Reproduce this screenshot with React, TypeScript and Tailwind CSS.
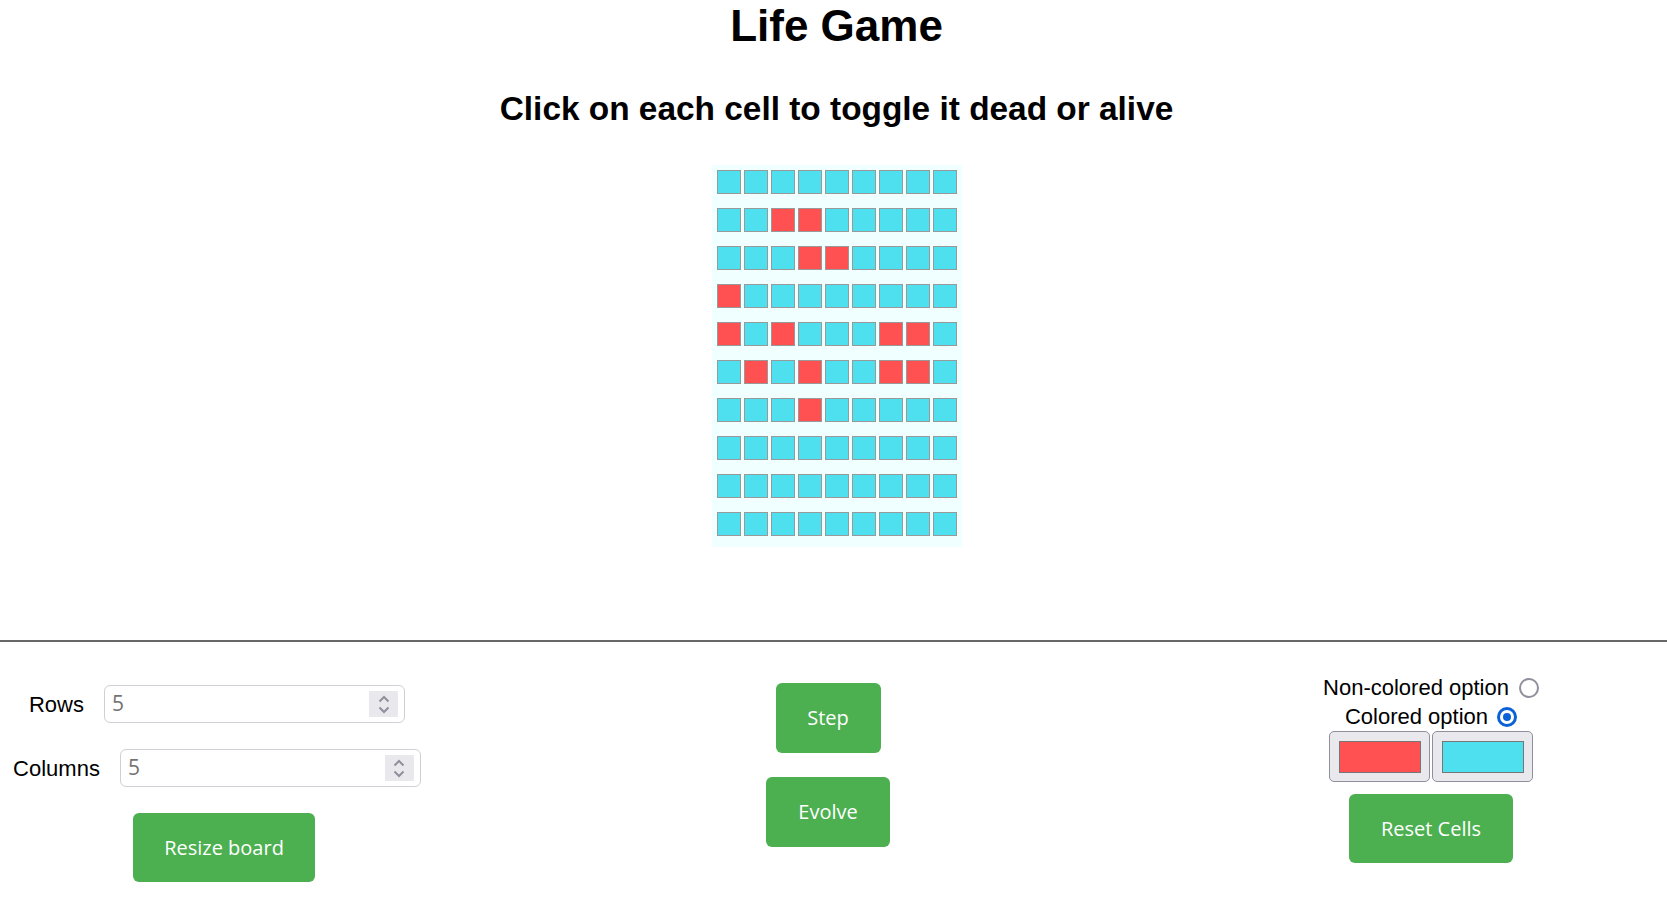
import React, { useState } from 'react'

const ALIVE: number[][] = [[], [2, 3], [3, 4], [0], [0, 2, 6, 7], [1, 3, 6, 7], [3], [], [], []]

const btn =
  "bg-[#4caf50] text-white rounded-[6px] text-[20px] font-['Open_Sans',sans-serif] flex items-center justify-center"

const Spinner = () => (
  <div className="absolute right-[6px] top-[5px] bottom-[5px] w-[29px] bg-[#e9e9ed] flex flex-col items-center justify-center gap-[3px]">
    <svg width="12" height="8" viewBox="0 0 12 8">
      <path d="M1.5 6.5 L6 2 L10.5 6.5" fill="none" stroke="#8f8f9d" strokeWidth="2" />
    </svg>
    <svg width="12" height="8" viewBox="0 0 12 8">
      <path d="M1.5 1.5 L6 6 L10.5 1.5" fill="none" stroke="#8f8f9d" strokeWidth="2" />
    </svg>
  </div>
)

const NumberField = ({ label }: { label: string }) => (
  <div className="flex items-center gap-[20px]">
    <span className="text-[22px] text-black">{label}</span>
    <div className="relative w-[301px] h-[38px] border border-[#cfcfd8] rounded-[6px] bg-white">
      <span className="absolute left-[7px] top-0 bottom-0 flex items-center text-[21px] text-[#737373] font-['Open_Sans',sans-serif]">
        5
      </span>
      <Spinner />
    </div>
  </div>
)

const Radio = ({ checked }: { checked?: boolean }) =>
  checked ? (
    <span className="w-[20px] h-[20px] rounded-full border-[3px] border-[#0b62d6] bg-white flex items-center justify-center">
      <span className="w-[8px] h-[8px] rounded-full bg-[#0b62d6]" />
    </span>
  ) : (
    <span className="w-[20px] h-[20px] rounded-full border-2 border-[#8f8f9d] bg-white" />
  )

export default function App() {
  const [board] = useState(() =>
    ALIVE.map((row) => Array.from({ length: 9 }, (_, c) => row.includes(c)))
  )

  return (
    <div className="min-h-screen bg-white font-['Liberation_Sans',Arial,sans-serif] text-black">
      <div className="flex flex-col items-center pl-[6px]">
        <h1 className="m-0 text-[44px] leading-[51px] font-bold">Life Game</h1>
        <h2 className="mt-[39px] text-[33.4px] leading-[38px] font-bold">
          Click on each cell to toggle it dead or alive
        </h2>
        <div className="mt-[37px] bg-[#f0ffff] pt-[5px] pb-[11px] px-[5px] flex flex-col gap-[14px]">
          {board.map((row, r) => (
            <div key={r} className="flex gap-[3px]">
              {row.map((alive, c) => (
                <div
                  key={c}
                  className={
                    alive
                      ? 'w-[24px] h-[24px] border border-[#999] bg-[#ff5152]'
                      : 'w-[24px] h-[24px] border border-[#999] bg-[#4fe0ef]'
                  }
                />
              ))}
            </div>
          ))}
        </div>
      </div>

      <div className="mt-[93px] h-[2px] bg-[#676767]" />

      <div className="flex items-start">
        <div className="w-[434px] flex flex-col items-center pt-[43px] gap-[26px]">
          <NumberField label="Rows" />
          <NumberField label="Columns" />
          <button className={`${btn} w-[182px] h-[69px] ml-[14px]`}>Resize board</button>
        </div>

        <div className="w-[788px] flex flex-col items-center pt-[41px] gap-[24px]">
          <button className={`${btn} w-[105px] h-[70px]`}>Step</button>
          <button className={`${btn} w-[124px] h-[70px]`}>Evolve</button>
        </div>

        <div className="w-[418px] flex flex-col items-center pt-[31px]">
          <label className="flex items-center gap-[10px] text-[22px] leading-[29px]">
            Non-colored option <Radio />
          </label>
          <label className="flex items-center gap-[9px] text-[22px] leading-[29px]">
            Colored option <Radio checked />
          </label>
          <div className="flex gap-[2px]">
            <div className="w-[101px] h-[51px] bg-[#e9e9ed] border border-[#8f8f9d] rounded-[5px] flex items-center justify-center">
              <div className="w-[82px] h-[32px] border border-[#767676] bg-[#ff5152]" />
            </div>
            <div className="w-[101px] h-[51px] bg-[#e9e9ed] border border-[#8f8f9d] rounded-[5px] flex items-center justify-center">
              <div className="w-[82px] h-[32px] border border-[#767676] bg-[#4fe0ef]" />
            </div>
          </div>
          <button className={`${btn} mt-[12px] w-[164px] h-[69px]`}>Reset Cells</button>
        </div>
      </div>
    </div>
  )
}
